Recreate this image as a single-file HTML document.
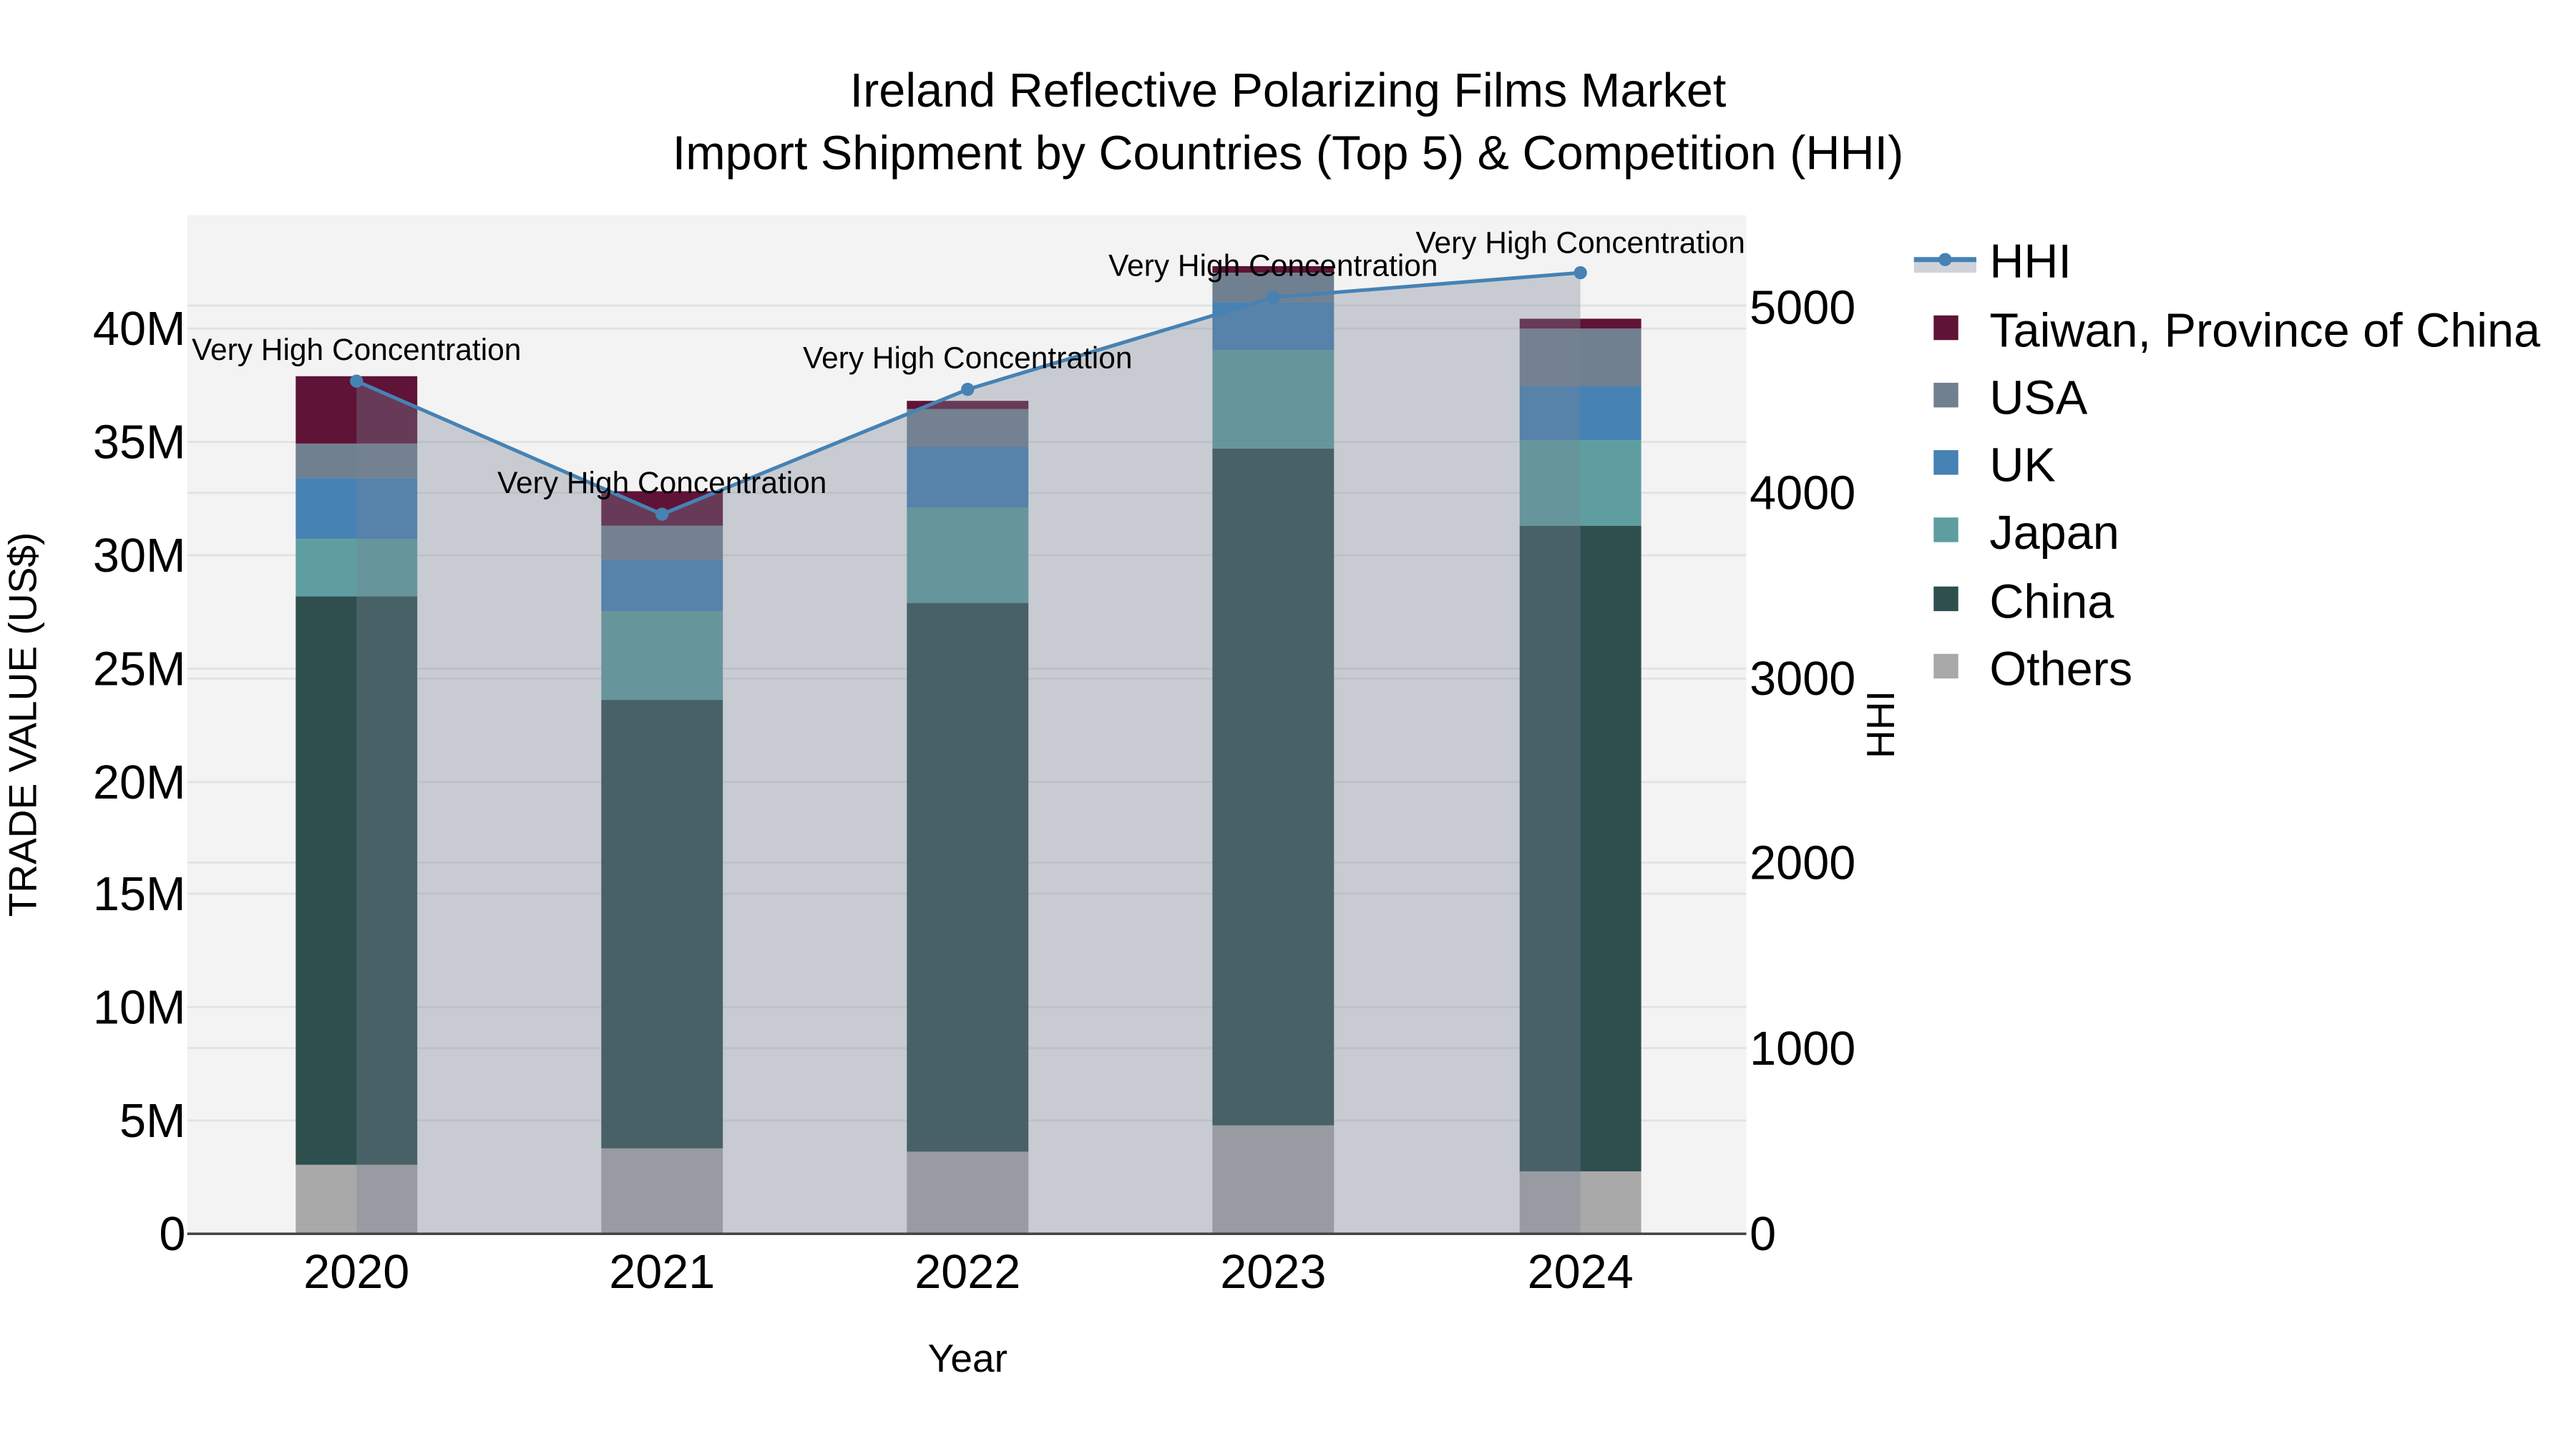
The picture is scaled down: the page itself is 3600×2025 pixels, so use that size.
<!DOCTYPE html>
<html><head><meta charset="utf-8"><style>html,body{margin:0;padding:0;background:#fff}svg{display:block}text{font-family:"Liberation Sans",sans-serif;fill:#000}</style></head><body>
<svg width="3600" height="2025" viewBox="0 0 1568 882" xmlns="http://www.w3.org/2000/svg">
<rect x="0" y="0" width="1568" height="882" fill="#fff"/>
<rect x="114" y="131" width="949" height="620" fill="#f3f3f3"/>
<g stroke="#e2e2e2" stroke-width="1.2">
<line x1="114" x2="1063" y1="682" y2="682"/><line x1="114" x2="1063" y1="613" y2="613"/><line x1="114" x2="1063" y1="544" y2="544"/><line x1="114" x2="1063" y1="476" y2="476"/><line x1="114" x2="1063" y1="407" y2="407"/><line x1="114" x2="1063" y1="338" y2="338"/><line x1="114" x2="1063" y1="269" y2="269"/><line x1="114" x2="1063" y1="200" y2="200"/>
<line x1="114" x2="1063" y1="638" y2="638"/><line x1="114" x2="1063" y1="525" y2="525"/><line x1="114" x2="1063" y1="413" y2="413"/><line x1="114" x2="1063" y1="300" y2="300"/><line x1="114" x2="1063" y1="186" y2="186"/>
</g>
<g>
<rect x="180" y="709" width="74" height="42" fill="#a9a9a9"/><rect x="180" y="363" width="74" height="346" fill="#2f4f4f"/><rect x="180" y="328" width="74" height="35" fill="#5f9ea0"/><rect x="180" y="291" width="74" height="37" fill="#4682b4"/><rect x="180" y="270" width="74" height="21" fill="#708090"/><rect x="180" y="229" width="74" height="41" fill="#5f1336"/>
<rect x="366" y="699" width="74" height="52" fill="#a9a9a9"/><rect x="366" y="426" width="74" height="273" fill="#2f4f4f"/><rect x="366" y="372" width="74" height="54" fill="#5f9ea0"/><rect x="366" y="341" width="74" height="31" fill="#4682b4"/><rect x="366" y="320" width="74" height="21" fill="#708090"/><rect x="366" y="299" width="74" height="21" fill="#5f1336"/>
<rect x="552" y="701" width="74" height="50" fill="#a9a9a9"/><rect x="552" y="367" width="74" height="334" fill="#2f4f4f"/><rect x="552" y="309" width="74" height="58" fill="#5f9ea0"/><rect x="552" y="272" width="74" height="37" fill="#4682b4"/><rect x="552" y="249" width="74" height="23" fill="#708090"/><rect x="552" y="244" width="74" height="5" fill="#5f1336"/>
<rect x="738" y="685" width="74" height="66" fill="#a9a9a9"/><rect x="738" y="273" width="74" height="412" fill="#2f4f4f"/><rect x="738" y="213" width="74" height="60" fill="#5f9ea0"/><rect x="738" y="184" width="74" height="29" fill="#4682b4"/><rect x="738" y="166" width="74" height="18" fill="#708090"/><rect x="738" y="162" width="74" height="4" fill="#5f1336"/>
<rect x="925" y="713" width="74" height="38" fill="#a9a9a9"/><rect x="925" y="320" width="74" height="393" fill="#2f4f4f"/><rect x="925" y="268" width="74" height="52" fill="#5f9ea0"/><rect x="925" y="235" width="74" height="33" fill="#4682b4"/><rect x="925" y="200" width="74" height="35" fill="#708090"/><rect x="925" y="194" width="74" height="6" fill="#5f1336"/>
</g>
<polygon points="217,751 217,232 403,313 589,237 775,181 962,166 962,751" fill="rgba(120,132,148,0.35)"/>
<polyline points="217,232 403,313 589,237 775,181 962,166" fill="none" stroke="#4682b4" stroke-width="2.2"/>
<g fill="#4682b4"><circle cx="217" cy="232" r="4"/><circle cx="403" cy="313" r="4"/><circle cx="589" cy="237" r="4"/><circle cx="775" cy="181" r="4"/><circle cx="962" cy="166" r="4"/></g>
<line x1="114" x2="1063" y1="751" y2="751" stroke="#444" stroke-width="1.5"/>
<g font-size="18.5" text-anchor="middle">
<text x="217" y="219">Very High Concentration</text><text x="403" y="300">Very High Concentration</text><text x="589" y="224">Very High Concentration</text><text x="775" y="168">Very High Concentration</text><text x="962" y="154">Very High Concentration</text>
</g>
<g font-size="29" text-anchor="middle">
<text x="784" y="65">Ireland Reflective Polarizing Films Market</text>
<text x="784" y="103">Import Shipment by Countries (Top 5) &amp; Competition (HHI)</text>
</g>
<g font-size="29" text-anchor="end">
<text x="113" y="761">0</text><text x="113" y="692">5M</text><text x="113" y="623">10M</text><text x="113" y="554">15M</text><text x="113" y="486">20M</text><text x="113" y="417">25M</text><text x="113" y="348">30M</text><text x="113" y="279">35M</text><text x="113" y="210">40M</text>
</g>
<g font-size="29" text-anchor="start">
<text x="1065" y="761">0</text><text x="1065" y="648">1000</text><text x="1065" y="535">2000</text><text x="1065" y="423">3000</text><text x="1065" y="310">4000</text><text x="1065" y="197">5000</text>
</g>
<g font-size="29" text-anchor="middle">
<text x="217" y="784">2020</text><text x="403" y="784">2021</text><text x="589" y="784">2022</text><text x="775" y="784">2023</text><text x="962" y="784">2024</text>
</g>
<text x="589" y="835" font-size="24" text-anchor="middle">Year</text>
<text transform="translate(22,441) rotate(-90)" font-size="24" text-anchor="middle">TRADE VALUE (US$)</text>
<text transform="translate(1153,441) rotate(-90)" font-size="24" text-anchor="middle">HHI</text>
<rect x="1165" y="158" width="38" height="8" fill="#cfd3d9"/>
<line x1="1165" x2="1203" y1="158" y2="158" stroke="#4682b4" stroke-width="3"/>
<circle cx="1184" cy="158" r="4" fill="#4682b4"/>
<g font-size="29">
<text x="1211" y="169">HHI</text>
<text x="1211" y="211">Taiwan, Province of China</text>
<text x="1211" y="252">USA</text>
<text x="1211" y="293">UK</text>
<text x="1211" y="334">Japan</text>
<text x="1211" y="376">China</text>
<text x="1211" y="417">Others</text>
</g>
<rect x="1177" y="192" width="15" height="15" fill="#5f1336"/>
<rect x="1177" y="233" width="15" height="15" fill="#708090"/>
<rect x="1177" y="274" width="15" height="15" fill="#4682b4"/>
<rect x="1177" y="315" width="15" height="15" fill="#5f9ea0"/>
<rect x="1177" y="357" width="15" height="15" fill="#2f4f4f"/>
<rect x="1177" y="398" width="15" height="15" fill="#a9a9a9"/>
</svg>
</body></html>
